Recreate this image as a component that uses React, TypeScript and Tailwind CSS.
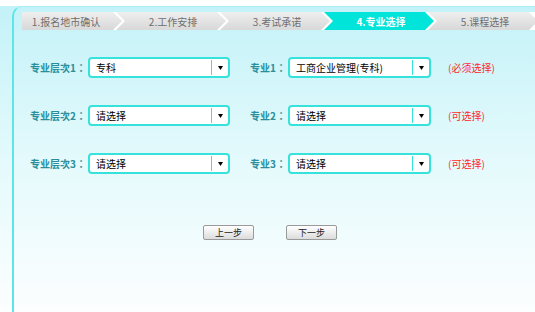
import { JSX } from 'react';

const font = { fontFamily: '"Noto Sans CJK SC", "Liberation Sans", sans-serif' };
const labelFont = { fontFamily: '"Noto Sans CJK TC", "Noto Sans CJK SC", sans-serif' };

const tabs = ['1.报名地市确认', '2.工作安排', '3.考试承诺', '4.专业选择', '5.课程选择'];
const activeTab = 3;

const rows = [
  { level: '专业层次1：', levelValue: '专科', major: '专业1：', majorValue: '工商企业管理(专科)', hint: '(必须选择)' },
  { level: '专业层次2：', levelValue: '请选择', major: '专业2：', majorValue: '请选择', hint: '(可选择)' },
  { level: '专业层次3：', levelValue: '请选择', major: '专业3：', majorValue: '请选择', hint: '(可选择)' },
];

function Tab(props: Readonly<{ label: string; index: number }>): JSX.Element {
  const { label, index } = props;
  const first = index === 0;
  const active = index === activeTab;
  return (
    <div
      className={
        (first
          ? 'w-[100px] shrink-0 pr-[12px] [clip-path:polygon(0_0,calc(100%-9px)_0,100%_50%,calc(100%-9px)_100%,0_100%)]'
          : 'ml-[-6px] w-[110px] shrink-0 pl-[4px] [clip-path:polygon(0_0,calc(100%-9px)_0,100%_50%,calc(100%-9px)_100%,0_100%,9px_50%)]') +
        ' flex h-full items-center justify-center text-[10px] ' +
        (active ? 'bg-[#00e4da] font-bold text-white' : 'bg-gradient-to-b from-[#efefef] to-[#d8d8d8] text-[#6f6f6f]')
      }
    >
      {label}
    </div>
  );
}

function Select(props: Readonly<{ value: string; width: string }>): JSX.Element {
  const { value, width } = props;
  return (
    <div className={width + ' flex h-[21px] items-stretch rounded-[4px] border-2 border-[#36e2dc] bg-white'}>
      <div className="flex flex-1 items-center pl-[6px] text-[10px] text-black">{value}</div>
      <div className="my-[1px] w-px bg-[#36e2dc]" />
      <div className="flex w-[16px] items-center justify-center">
        <svg width="5" height="4" viewBox="0 0 5 4">
          <polygon points="0,0 5,0 2.5,4" fill="#000" />
        </svg>
      </div>
    </div>
  );
}

function Button(props: Readonly<{ label: string }>): JSX.Element {
  return (
    <div className="flex h-[15px] w-[51px] items-center justify-center rounded-[2px] border border-[#9a9a9a] bg-gradient-to-b from-[#ffffff] to-[#dcdcdc] text-[9px] text-[#222]">
      {props.label}
    </div>
  );
}

export default function App(): JSX.Element {
  return (
    <div className="flex h-[312px] w-[535px] flex-col bg-white pt-[6px]" style={font}>
      <div className="flex flex-1">
        <div className="flex flex-1 bg-gradient-to-b from-[#c3f2f8] via-[#e4fafc] to-[#fcfeff] pl-[12px]">
          <div className="flex flex-1 flex-col rounded-tl-[10px] border-t border-l-2 border-t-[#a6eef4] border-l-[#5ce6e6]">
            <div className="mt-[5px] ml-[8px] flex h-[18px] overflow-hidden bg-white">
              {tabs.map((t, i) => (
                <Tab key={t} label={t} index={i} />
              ))}
            </div>

            <div className="mt-[27px] flex flex-col gap-[27px] pl-[16px]">
              {rows.map((r) => (
                <div key={r.level} className="flex h-[21px] items-center">
                  <div className="w-[58px] text-[10px] font-bold text-[#2a8e9c]" style={labelFont}>
                    {r.level}
                  </div>
                  <Select value={r.levelValue} width="w-[142px]" />
                  <div className="ml-[20px] w-[38px] text-[10px] font-bold text-[#2a8e9c]" style={labelFont}>
                    {r.major}
                  </div>
                  <Select value={r.majorValue} width="w-[143px]" />
                  <div className="ml-[17px] text-[10px] text-[#ff2b2b]">{r.hint}</div>
                </div>
              ))}
            </div>

            <div className="mt-[51px] flex gap-[32px] pl-[189px]">
              <Button label="上一步" />
              <Button label="下一步" />
            </div>
          </div>
        </div>
        <div className="w-[13px] border-l border-[#dfe6e8] bg-[#c8d2d5]" />
      </div>
    </div>
  );
}
